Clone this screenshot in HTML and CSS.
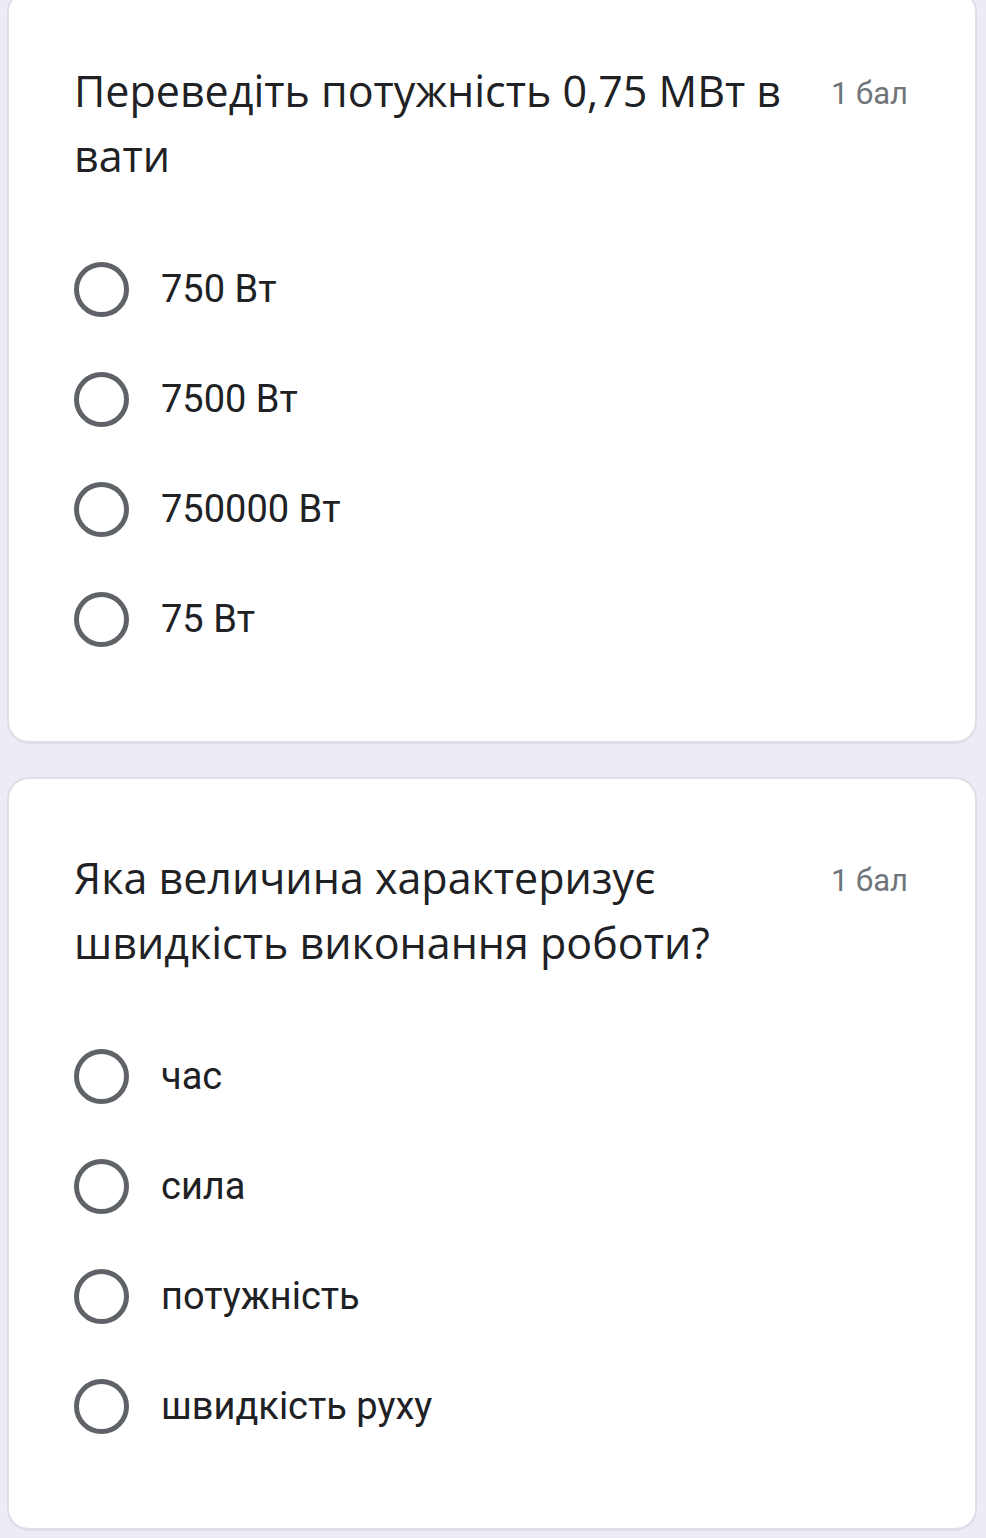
FILE: index.html
```html
<!DOCTYPE html>
<html lang="uk">
<head>
<meta charset="utf-8">
<title>Форма</title>
<link rel="stylesheet" href="styles.css">
</head>
<body>
<div class="list">
  <div class="card">
    <div class="head">
      <div class="title">Переведіть потужність 0,75 МВт в вати</div>
      <div class="points">1 бал</div>
    </div>
    <div class="options">
      <div class="opt"><span class="radio"></span><span class="label">750 Вт</span></div>
      <div class="opt"><span class="radio"></span><span class="label">7500 Вт</span></div>
      <div class="opt"><span class="radio"></span><span class="label">750000 Вт</span></div>
      <div class="opt"><span class="radio"></span><span class="label">75 Вт</span></div>
    </div>
  </div>
  <div class="card">
    <div class="head">
      <div class="title">Яка величина характеризує швидкість виконання роботи?</div>
      <div class="points">1 бал</div>
    </div>
    <div class="options">
      <div class="opt"><span class="radio"></span><span class="label">час</span></div>
      <div class="opt"><span class="radio"></span><span class="label">сила</span></div>
      <div class="opt"><span class="radio"></span><span class="label">потужність</span></div>
      <div class="opt"><span class="radio"></span><span class="label">швидкість руху</span></div>
    </div>
  </div>
</div>
</body>
</html>
```
FILE: styles.css
```css
html, body {
  margin: 0;
  padding: 0;
  background: #eeebf6;
}
body {
  font-family: Roboto, "Liberation Sans", sans-serif;
  color: #202124;
}
.list {
  display: flex;
  flex-direction: column;
  gap: 33px;
  padding: 0 9px 0 7px;
  margin-top: -10px;
}
.card {
  background: #fff;
  border: 2px solid #dfdde6;
  border-bottom-width: 3px;
  border-radius: 22px;
  padding: 66px 67px 67px 65px;
}
.head {
  display: flex;
  align-items: flex-start;
  gap: 30px;
}
.title {
  flex: 1;
  font-family: "Open Sans", Roboto, sans-serif;
  font-size: 43px;
  line-height: 65px;
  letter-spacing: 0;
}
.points {
  font-size: 31px;
  line-height: 65px;
  color: #70757a;
  white-space: nowrap;
  margin-top: 3px;
}
.options {
  margin-top: 46px;
  display: flex;
  flex-direction: column;
}
.opt {
  height: 110px;
  display: flex;
  align-items: center;
}
.radio {
  box-sizing: border-box;
  width: 55px;
  height: 55px;
  border: 5.5px solid #5f6368;
  border-radius: 50%;
  flex: none;
}
.label {
  margin-left: 32px;
  font-size: 38px;
}
```
